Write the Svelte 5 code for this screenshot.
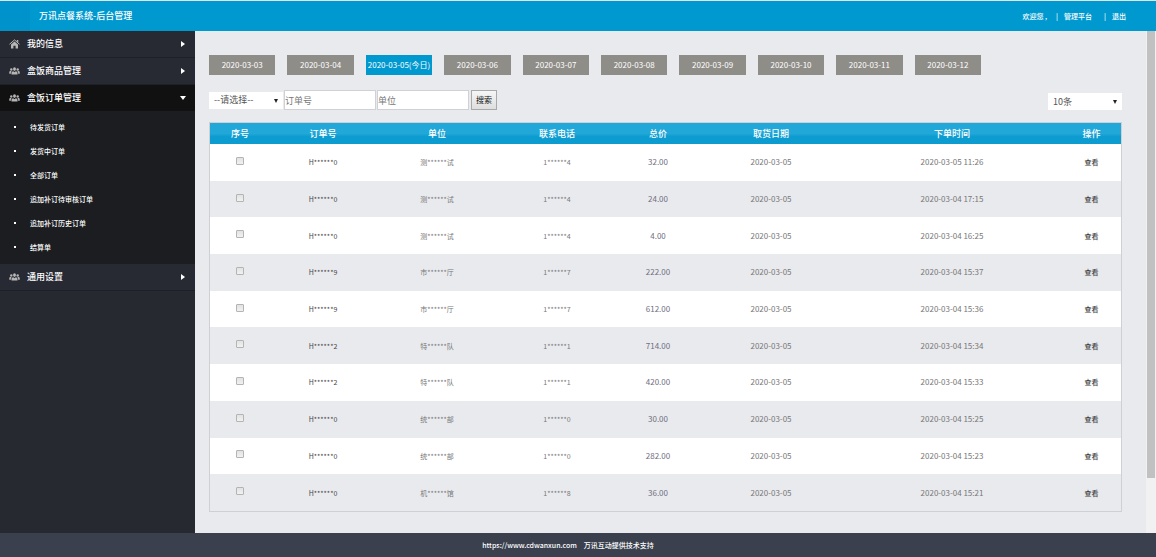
<script lang="ts">
	interface Order {
		no: string;
		unit: string;
		phone: string;
		price: string;
		pickup: string;
		created: string;
	}

	const menu = [
		{ label: '我的信息', icon: 'home', children: [] },
		{ label: '盒饭商品管理', icon: 'users', children: [] },
		{
			label: '盒饭订单管理',
			icon: 'users',
			children: ['待发货订单', '发货中订单', '全部订单', '追加补订待审核订单', '追加补订历史订单', '结算单']
		},
		{ label: '通用设置', icon: 'users', children: [] }
	];

	const today = '2020-03-05';
	const days = [
		'2020-03-03',
		'2020-03-04',
		'2020-03-05',
		'2020-03-06',
		'2020-03-07',
		'2020-03-08',
		'2020-03-09',
		'2020-03-10',
		'2020-03-11',
		'2020-03-12'
	];

	const columns = [
		{ title: '序号', width: 60 },
		{ title: '订单号', width: 106 },
		{ title: '单位', width: 122 },
		{ title: '联系电话', width: 118 },
		{ title: '总价', width: 84 },
		{ title: '取货日期', width: 142 },
		{ title: '下单时间', width: 220 },
		{ title: '操作', width: 59 }
	];
	const total = columns.reduce((sum, c) => sum + c.width, 0);

	const order = (no: string, unit: string, phone: string, price: string, created: string): Order => ({
		no,
		unit,
		phone,
		price,
		pickup: '2020-03-05',
		created
	});

	const orders: Order[] = [
		order('H******0', '测******试', '1******4', '32.00', '2020-03-05 11:26'),
		order('H******0', '测******试', '1******4', '24.00', '2020-03-04 17:15'),
		order('H******0', '测******试', '1******4', '4.00', '2020-03-04 16:25'),
		order('H******9', '市******厅', '1******7', '222.00', '2020-03-04 15:37'),
		order('H******9', '市******厅', '1******7', '612.00', '2020-03-04 15:36'),
		order('H******2', '特******队', '1******1', '714.00', '2020-03-04 15:34'),
		order('H******2', '特******队', '1******1', '420.00', '2020-03-04 15:33'),
		order('H******0', '统******部', '1******0', '30.00', '2020-03-04 15:25'),
		order('H******0', '统******部', '1******0', '282.00', '2020-03-04 15:23'),
		order('H******0', '机******馆', '1******8', '36.00', '2020-03-04 15:21')
	];

	let open = $state('盒饭订单管理');
	let selected = $state(today);
</script>

<div class="page">
	<header class="header">
		<span class="logo"></span>
		<h1>万讯点餐系统-后台管理</h1>
		<nav class="account">
			<span>欢迎您 ,</span>
			<span class="bar">|</span>
			<a href="#platform">管理平台</a>
			<span class="bar wide">|</span>
			<a href="#logout">退出</a>
		</nav>
	</header>

	<div class="body">
		<nav class="sidebar">
			{#each menu as item}
				{@const active = item.label === open}
				<button class="menu-item" class:active onclick={() => (open = item.label)}>
					{#if item.icon === 'home'}
						<svg class="icon" viewBox="0 0 22 20" aria-hidden="true">
							<path d="M1 10.5 11 1.8l10 8.7" fill="none" stroke="currentColor" stroke-width="2" />
							<path d="M15.5 2h3v5l-3-2.6z" />
							<path d="M4 11.2 11 5.2l7 6V19h-4.8v-5.5H8.8V19H4z" />
						</svg>
					{:else}
						<svg class="icon" viewBox="0 0 22 20" aria-hidden="true">
							<circle cx="4.6" cy="7" r="2.4" />
							<circle cx="17.4" cy="7" r="2.4" />
							<path d="M.5 15.5v-2.8c0-1.6 1.2-2.6 2.8-2.6h2.2c-1.3 1-1.7 2.2-1.7 3.6v1.8z" />
							<path d="M21.5 15.5v-2.8c0-1.6-1.2-2.6-2.8-2.6h-2.2c1.3 1 1.7 2.2 1.7 3.6v1.8z" />
							<ellipse cx="11" cy="6.2" rx="3" ry="3.6" />
							<path d="M5 17v-3c0-2 1.5-3.2 3.6-3.5L11 12.6l2.4-2.1c2.1.3 3.6 1.5 3.6 3.5v3z" />
						</svg>
					{/if}
					<span class="menu-label">{item.label}</span>
					<span class="caret"></span>
				</button>
				{#if active && item.children.length}
					<ul class="submenu">
						{#each item.children as child}
							<li><a href="#orders">{child}</a></li>
						{/each}
					</ul>
				{/if}
			{/each}
		</nav>

		<main class="content">
			<div class="days">
				{#each days as day}
					<button class="day" class:selected={day === selected} onclick={() => (selected = day)}>
						{day}{day === today ? '(今日)' : ''}
					</button>
				{/each}
			</div>

			<form class="filters" onsubmit={(e) => e.preventDefault()}>
				<span class="select">
					<select aria-label="请选择"><option>--请选择--</option></select>
					<svg viewBox="0 0 4 4" aria-hidden="true"><path d="M0 0h4L2 4z" /></svg>
				</span>
				<input type="text" aria-label="订单号" placeholder="订单号" />
				<input type="text" aria-label="单位" placeholder="单位" />
				<button class="search">搜索</button>
				<span class="select page-size">
					<select aria-label="条数"><option>10条</option></select>
					<svg viewBox="0 0 4 4" aria-hidden="true"><path d="M0 0h4L2 4z" /></svg>
				</span>
			</form>

			<div class="table-wrap">
				<table>
					<colgroup>
						{#each columns as col}
							<col style="width: {(col.width / total) * 100}%" />
						{/each}
					</colgroup>
					<thead>
						<tr>
							{#each columns as col}
								<th>{col.title}</th>
							{/each}
						</tr>
					</thead>
					<tbody>
						{#each orders as row, i}
							<tr>
								<td><input type="checkbox" aria-label="选择第{i + 1}行" /></td>
								<td class="masked dark">{row.no}</td>
								<td class="masked">{row.unit}</td>
								<td class="masked">{row.phone}</td>
								<td class="price">{row.price}</td>
								<td>{row.pickup}</td>
								<td>{row.created}</td>
								<td><a class="view" href="#view">查看</a></td>
							</tr>
						{/each}
					</tbody>
				</table>
			</div>
		</main>

		<div class="scrollbar"><span class="thumb"></span></div>
	</div>

	<footer class="footer">
		<a href="https://www.cdwanxun.com">https://www.cdwanxun.com</a>
		<span>万讯互动提供技术支持</span>
	</footer>
</div>

<style>
	:global(body) {
		background: #e9eaee;
	}

	.page {
		display: flex;
		flex-direction: column;
		min-height: 100vh;
		font-family: 'Noto Sans CJK SC', 'Noto Sans', sans-serif;
		font-size: 8px;
		line-height: 12px;
		color: #777;
	}

	.page *,
	.page {
		box-sizing: border-box;
	}

	button,
	input,
	select {
		margin: 0;
		font: inherit;
		border-radius: 0;
	}

	a {
		color: inherit;
		text-decoration: none;
	}

	.header {
		display: flex;
		align-items: center;
		height: 31px;
		padding-right: 30px;
		border-top: 1px solid #dfe6e9;
		background: #0099cf;
		color: #fff;
	}

	.logo {
		align-self: stretch;
		width: 30px;
		background: #0093cb;
	}

	h1 {
		margin: 0 auto 0 9px;
		font-size: 9px;
		font-weight: 500;
	}

	.account {
		display: flex;
		align-items: center;
		font-size: 7px;
		font-weight: 500;
	}

	.bar {
		margin: 0 6px 0 9px;
	}

	.bar.wide {
		margin-left: 12px;
	}

	.body {
		display: flex;
		flex: 1;
	}

	.sidebar {
		width: 195px;
		flex-shrink: 0;
		background: #272931;
		color: #fff;
	}

	.menu-item {
		display: flex;
		align-items: center;
		width: 100%;
		height: 27px;
		padding: 0 9px;
		border: 0;
		border-bottom: 1px solid #1e2027;
		background: #272a33;
		color: #fff;
		font-size: 9px;
		font-weight: 500;
		text-align: left;
	}

	.menu-item.active {
		height: 26px;
		border-bottom: 0;
		background: #111;
	}

	.icon {
		width: 11px;
		height: 10px;
		margin-right: 7px;
		color: #b5b5b5;
		fill: currentColor;
	}

	.menu-label {
		flex: 1;
	}

	.caret {
		margin-right: 1px;
		border: 3px solid transparent;
		border-left: 4px solid #fff;
		border-right: 0;
	}

	.active .caret {
		margin-right: 0;
		border: 3px solid transparent;
		border-top: 4px solid #fff;
		border-bottom: 0;
	}

	.submenu {
		margin: 0;
		padding: 4px 0 5px;
		list-style: none;
		background: #1b1d20;
		font-size: 7px;
		font-weight: 500;
	}

	.submenu li {
		display: flex;
		align-items: center;
		gap: 14px;
		height: 24px;
		padding-left: 14px;
	}

	.submenu li::before {
		content: '';
		width: 2px;
		height: 2px;
		background: #fff;
	}

	.content {
		display: flex;
		flex: 1;
		flex-direction: column;
		min-width: 0;
		padding: 24px 24px 21px 14px;
		background: #e9eaee;
	}

	.days {
		display: grid;
		grid-template-columns: repeat(10, 1fr);
		gap: 12px;
		margin-right: 141px;
	}

	.day {
		height: 20px;
		padding: 0;
		border: 0;
		background: #8f8d88;
		color: #fff;
		white-space: nowrap;
	}

	.day.selected {
		background: #0099cf;
	}

	.filters {
		display: flex;
		align-items: center;
		gap: 1px;
		margin: 15px 0 12px;
		font-size: 9px;
	}

	.select {
		position: relative;
		width: 74px;
		height: 17px;
	}

	.select select {
		display: block;
		width: 100%;
		height: 100%;
		padding: 0 5px;
		appearance: none;
		border: 0;
		background: #fff;
		color: #555;
	}

	.select svg {
		position: absolute;
		top: 7px;
		right: 5px;
		width: 4px;
		height: 4px;
		fill: #222;
	}

	.page-size {
		align-self: flex-end;
		margin-left: auto;
	}

	.filters input {
		width: 92px;
		height: 20px;
		padding: 0;
		border: 1px solid #d0d1d6;
		background: #fff;
	}

	.filters input::placeholder {
		color: #777;
	}

	.search {
		width: 26px;
		height: 20px;
		margin-left: 1px;
		padding: 0;
		border: 1px solid #a9a9a9;
		background: linear-gradient(#f6f6f6, #dedede);
		color: #111;
		font-size: 8px;
	}

	.table-wrap {
		display: grid;
		flex: 1;
		border: 1px solid #cfd0d6;
	}

	table {
		width: 100%;
		height: 100%;
		table-layout: fixed;
		border-collapse: collapse;
		text-align: center;
	}

	th,
	td {
		padding: 0;
	}

	thead tr {
		height: 21px;
		background: linear-gradient(#21a7d8 50%, #0d9ccf 65%);
	}

	th {
		color: #fff;
		font-size: 9px;
		font-weight: 500;
	}

	tbody tr:nth-child(odd) {
		background: #fff;
	}

	.masked {
		font-size: 7px;
	}

	.dark {
		color: #444;
	}

	.price {
		color: #6e6e80;
	}

	.view {
		color: #444;
		font-size: 7px;
		font-weight: 500;
	}

	td input {
		display: block;
		width: 8px;
		height: 8px;
		margin: 0 auto 3px;
		appearance: none;
		border: 1px solid #b4b4b4;
		border-radius: 1px;
		background: linear-gradient(#e2e2e2, #f1f1f1);
	}

	td input:checked {
		background: #0099cf;
	}

	.scrollbar {
		width: 10px;
		padding: 0 1px;
		background: #f1f1f1;
	}

	.thumb {
		display: block;
		height: 89%;
		background: #c1c1c1;
	}

	.footer {
		display: flex;
		align-items: center;
		justify-content: center;
		gap: 7px;
		height: 24px;
		padding-right: 20px;
		background: #3a404e;
		color: #fff;
		font-size: 7px;
		font-weight: 500;
	}
</style>
